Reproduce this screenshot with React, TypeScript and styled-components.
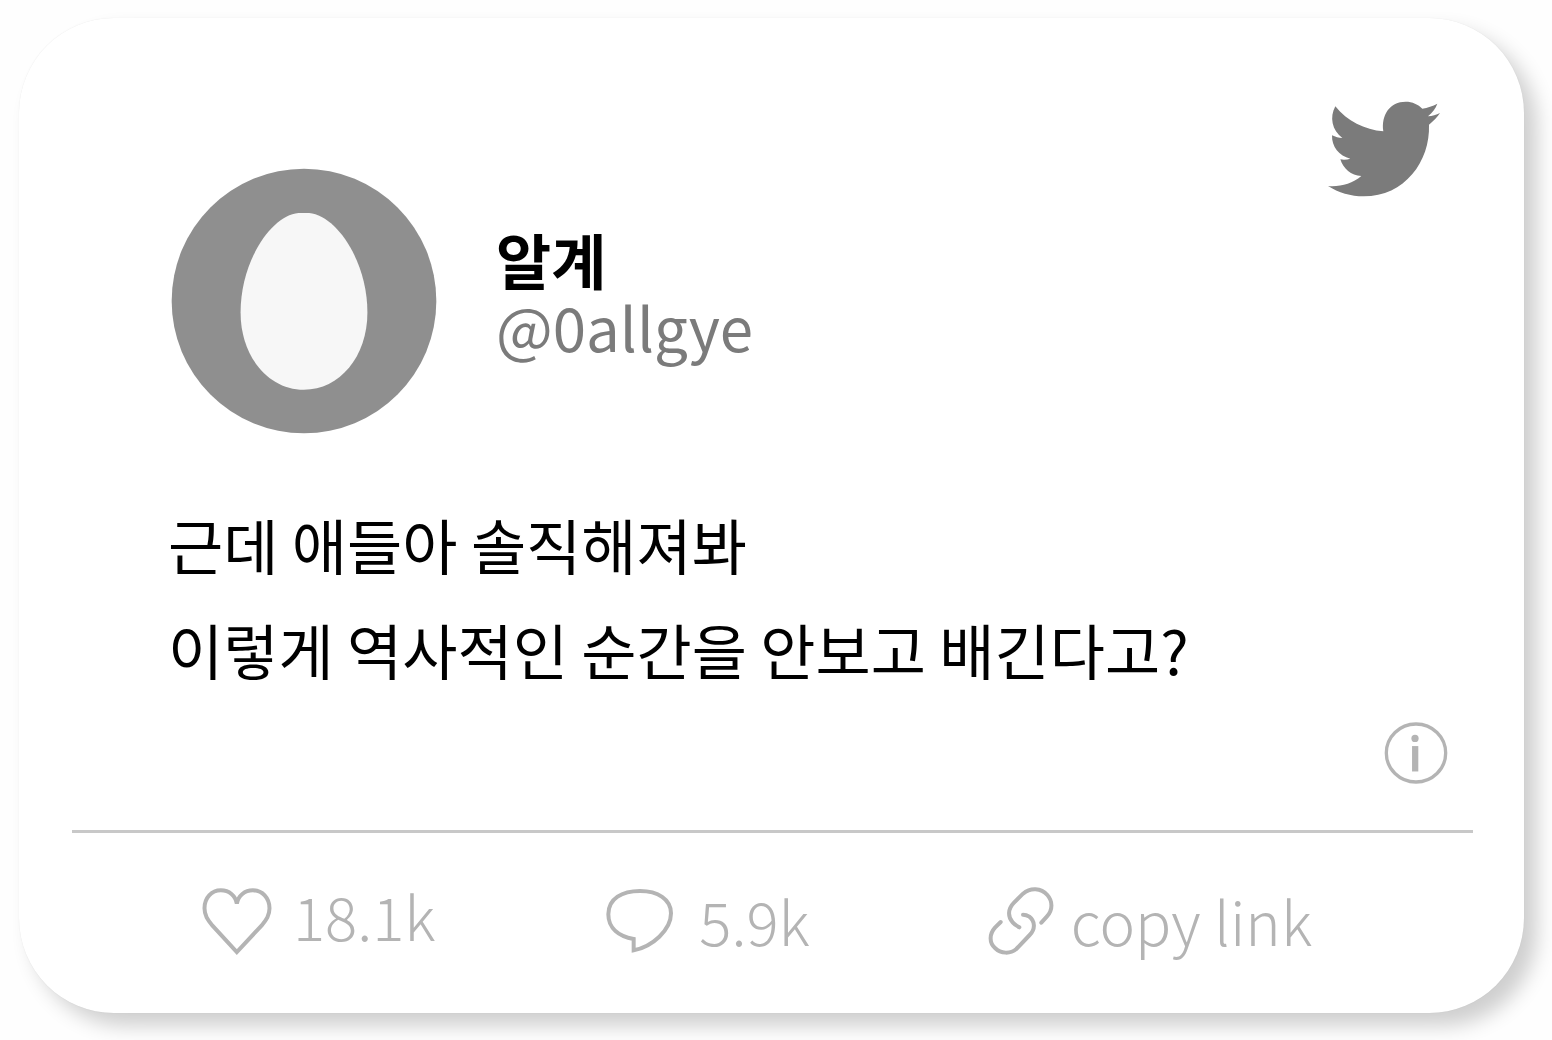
import React from "react";
import styled, { createGlobalStyle } from "styled-components";

const GlobalStyle = createGlobalStyle`
  * { box-sizing: border-box; }
  body {
    margin: 0;
    background: #fefefe;
    font-family: "Noto Sans CJK KR", "Noto Sans", sans-serif;
    color: #000;
  }
`;

const Page = styled.main`
  padding: 18px 28px 27px 19px;
`;

const Card = styled.article`
  padding: 83px 51px 58px 53px;
  border-radius: 95px;
  background: #fff;
  box-shadow: 13px 13px 20px rgba(0, 0, 0, 0.19), 0 0 1px rgba(0, 0, 0, 0.1);
`;

const Header = styled.header`
  display: flex;
  align-items: flex-start;
  padding: 0 33px 0 99px;
`;

const Profile = styled.div`
  display: flex;
  flex: 1;
  align-items: center;
  gap: 59px;
  padding-top: 67px;
`;

const Avatar = styled.svg`
  width: 266px;
  height: 266px;
`;

const Names = styled.div`
  display: flex;
  flex-direction: column;
  padding-bottom: 18px;
`;

const DisplayName = styled.h1`
  margin: 0;
  font-size: 60px;
  line-height: 67px;
  font-weight: 700;
`;

const Handle = styled.a`
  color: #7b7b7b;
  font-size: 60px;
  line-height: 67px;
  text-decoration: none;
`;

const Bird = styled.svg`
  width: 112px;
  height: 96px;
`;

const Message = styled.p`
  margin: 0;
  padding: 57px 96px 0;
  font-size: 60px;
  line-height: 105px;
`;

const InfoRow = styled.div`
  display: flex;
  justify-content: flex-end;
  padding: 21px 25px 46px;
`;

const IconButton = styled.button`
  display: flex;
  padding: 0;
  border: 0;
  background: none;
  color: #b4b4b4;
  cursor: pointer;
`;

const InfoIcon = styled.svg`
  width: 64px;
  height: 62px;
`;

const Actions = styled.footer`
  display: grid;
  grid-template-columns: 404fr 381fr 329fr;
  justify-items: start;
  padding: 54px 156px 0 130px;
  border-top: 3px solid #c8c8c8;
`;

const Action = styled.button<{ $line: number; $gap: number }>`
  display: flex;
  align-items: flex-start;
  gap: ${(p) => p.$gap}px;
  padding: 0;
  border: 0;
  background: none;
  color: #b4b4b4;
  font-family: inherit;
  font-size: 60px;
  font-weight: 300;
  line-height: ${(p) => p.$line}px;
  white-space: nowrap;
  cursor: pointer;
`;

const ActionIcon = styled.svg<{ $width: number }>`
  flex: none;
  width: ${(p) => p.$width}px;
  height: 68px;
  fill: none;
  stroke: currentColor;
  stroke-width: 12;
`;

export default function App() {
  return (
    <>
      <GlobalStyle />
      <Page>
        <Card>
          <Header>
            <Profile>
              <Avatar viewBox="66 53 795 799" aria-hidden="true">
                <circle cx="463.5" cy="452.5" r="397.5" fill="#8f8f8f" />
                <path
                  d="M447 188H479C563 196 654 335 654 487C654 620 570 719 463 719C357 719 273 620 273 487C273 335 363 196 447 188Z"
                  fill="#f7f7f7"
                />
              </Avatar>
              <Names>
                <DisplayName>알계</DisplayName>
                <Handle href="#profile">@0allgye</Handle>
              </Names>
            </Profile>
            <Bird viewBox="55 65 336 286" fill="#7b7b7b" role="img" aria-label="Twitter">
              <path d="M77 80C112 124 165 151 221 155C214 105 241 66 288 66C308 66 326 74 338 87C354 84 369 79 383 72C378 87 368 99 355 110C368 109 380 105 391 100C383 112 372 124 358 135C362 245 285 350 162 350C124 350 86 339 55 319C92 322 127 312 155 289C124 288 101 267 92 239C102 241 113 240 122 237C88 229 66 201 67 167C77 172 87 175 98 175C67 152 59 113 77 80Z" />
            </Bird>
          </Header>
          <Message>
            근데 애들아 솔직해져봐
            <br />
            이렇게 역사적인 순간을 안보고 배긴다고?
          </Message>
          <InfoRow>
            <IconButton type="button" aria-label="Info">
              <InfoIcon viewBox="44 65 192 188" aria-hidden="true">
                <ellipse cx="140" cy="159" rx="90" ry="88" fill="none" stroke="currentColor" strokeWidth="10" />
                <circle cx="137" cy="115" r="11" fill="currentColor" />
                <path d="M128 138h19v77h-19z" fill="currentColor" />
              </InfoIcon>
            </IconButton>
          </InfoRow>
          <Actions>
            <Action type="button" $line={55} $gap={21}>
              <ActionIcon $width={70} viewBox="68 53 209 204" aria-hidden="true">
                <path d="M172 103C168 79 149 63 124 63C96 63 75 86 75 117C75 138 84 151 99 169L172 248L246 169C261 151 270 138 270 117C270 86 248 63 220 63C196 63 176 79 172 103Z" />
              </ActionIcon>
              18.1k
            </Action>
            <Action type="button" $line={65} $gap={26}>
              <ActionIcon $width={67} viewBox="51 51 201 204" aria-hidden="true">
                <path d="M134 241V207C90 199 58 175 58 133C58 85 100 63 153 63C206 63 246 87 246 130C246 180 190 230 134 241Z" />
              </ActionIcon>
              5.9k
            </Action>
            <Action type="button" $line={65} $gap={17}>
              <ActionIcon $width={66} viewBox="53 50 198 204" strokeLinecap="round" aria-hidden="true">
                <path d="M213 157L230 138C248 118 247 92 231 74C212 52 180 51 158 70L131 97C112 116 112 140 127 156C133 163 140 167 147 171" />
                <path d="M91 155L74 172C56 192 57 218 74 233C92 251 120 251 138 236L178 194C196 176 194 152 177 139C171 135 166 133 158 133" />
              </ActionIcon>
              copy link
            </Action>
          </Actions>
        </Card>
      </Page>
    </>
  );
}
